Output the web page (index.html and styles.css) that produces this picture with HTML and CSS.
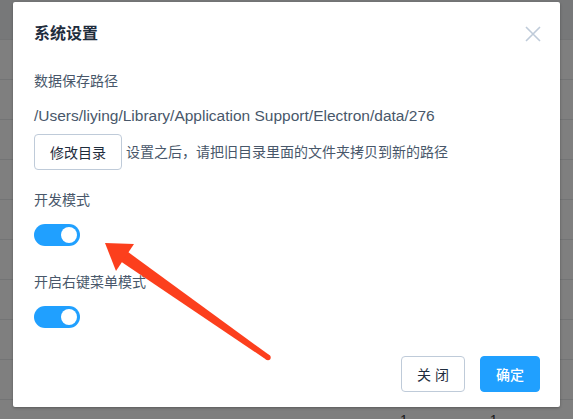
FILE: index.html
```html
<!DOCTYPE html>
<html>

<head>
    <title>系统设置</title>
    <meta name="viewport" content="width=device-width, initial-scale=1">
    <link rel="stylesheet" href="styles.css">
</head>

<body>
    <!-- table page behind the modal -->
    <div class="page">
        <div class="row row-head"></div>
        <div class="row"></div>
        <div class="row"></div>
        <div class="row"></div>
        <div class="row"></div>
        <div class="row"></div>
        <div class="row"></div>
        <div class="row"></div>
        <div class="row"></div>
        <div class="row"></div>
        <div class="row row-cells">
            <span class="cell cell-a">1</span>
            <span class="cell cell-b">1</span>
        </div>
    </div>

    <div class="dialog">
        <div class="dialog-header">
            <span class="dialog-title">系统设置</span>
            <button class="dialog-close" type="button">
                <svg width="16" height="16" viewBox="0 0 16 16">
                    <path d="M1 1L15 15M15 1L1 15" stroke="#bfcbd9" stroke-width="1.6" fill="none"/>
                </svg>
            </button>
        </div>

        <div class="dialog-body">
            <div class="field-label">数据保存路径</div>
            <div class="path">/Users/liying/Library/Application Support/Electron/data/276</div>
            <div class="dir-row">
                <button class="btn" type="button">修改目录</button>
                <span class="hint">设置之后，请把旧目录里面的文件夹拷贝到新的路径</span>
            </div>

            <div class="field-label field-gap">开发模式</div>
            <span class="switch is-on"><span class="switch-knob"></span></span>

            <div class="field-label field-gap-lg">开启右键菜单模式</div>
            <span class="switch is-on"><span class="switch-knob"></span></span>
        </div>

        <div class="dialog-footer">
            <button class="btn" type="button">关 闭</button>
            <button class="btn btn-primary" type="button">确定</button>
        </div>
    </div>

    <!-- annotation arrow drawn over the screenshot -->
    <svg class="arrow" width="573" height="419" viewBox="0 0 573 419">
        <polygon points="118.6,259.9 125.4,250.1 269.6,355.3 266.4,359.7" fill="#fc3f1d"/>
        <circle cx="268" cy="357.5" r="2.7" fill="#fc3f1d"/>
        <polygon points="105,243 134,244 116,271" fill="#fc3f1d"/>
    </svg>
</body>

</html>
```

FILE: styles.css
```css
html,
body {
    height: 419px;
}

body {
    margin: 0;
    padding: 0;
    font-family: "Liberation Sans", "Noto Sans CJK SC", sans-serif;
    background: #7f7f7f;
    overflow: hidden;
}

/* background page (already dimmed by the modal mask) */
.page {
    width: 573px;
}

.row {
    height: 40px;
    box-sizing: border-box;
    border-bottom: 1px solid #737475;
    position: relative;
}

.row-head {
    background: #777879;
}

.row-cells {
    display: flex;
    align-items: center;
    font-size: 14px;
    color: #1a1a1a;
}

.cell-a {
    margin-left: 400px;
}

.cell-b {
    margin-left: 82px;
}

/* dialog */
.dialog {
    position: absolute;
    top: 2px;
    left: 13px;
    width: 547px;
    background: #fff;
    border-radius: 2px;
    box-shadow: 0 1px 3px rgba(0, 0, 0, 0.3);
    color: #48576a;
}

.dialog-header {
    position: relative;
    padding: 20px 21px 0;
}

.dialog-title {
    display: block;
    font-size: 16px;
    line-height: 24px;
    font-weight: bold;
    color: #1f2d3d;
}

.dialog-close {
    position: absolute;
    top: 24px;
    right: 19px;
    width: 16px;
    height: 16px;
    padding: 0;
    border: none;
    background: none;
    cursor: pointer;
}

.dialog-close svg {
    display: block;
}

.dialog-body {
    padding: 25px 21px 18px;
    font-size: 14px;
    line-height: 20px;
}

.field-label {
    color: #48576a;
}

.field-gap {
    margin-top: 20px;
}

.field-gap-lg {
    margin-top: 26px;
}

.path {
    margin-top: 15px;
    font-size: 15.5px;
    color: #48576a;
}

.dir-row {
    display: flex;
    align-items: center;
    margin-top: 8px;
}

.hint {
    margin-left: 4px;
}

/* buttons */
.btn {
    height: 36px;
    padding: 0 15px;
    border: 1px solid #bfcbd9;
    border-radius: 4px;
    background: #fff;
    color: #1f2d3d;
    font-family: "Liberation Sans", "Noto Sans CJK SC", sans-serif;
    font-size: 14px;
    font-weight: normal;
    cursor: pointer;
}

.btn-primary {
    background: #20a0ff;
    border-color: #20a0ff;
    color: #fff;
    font-weight: 500;
}

/* switch */
.switch {
    display: block;
    position: relative;
    width: 46px;
    height: 22px;
    margin-top: 14px;
    border-radius: 12px;
    background: #bfcbd9;
}

.switch.is-on {
    background: #20a0ff;
}

.switch-knob {
    position: absolute;
    top: 3px;
    left: 3px;
    width: 16px;
    height: 16px;
    border-radius: 50%;
    background: #fff;
}

.switch.is-on .switch-knob {
    left: 27px;
}

.dialog-footer {
    display: flex;
    justify-content: flex-end;
    gap: 15px;
    padding: 10px 20px 15px;
}

.arrow {
    position: absolute;
    top: 0;
    left: 0;
    pointer-events: none;
}
```
